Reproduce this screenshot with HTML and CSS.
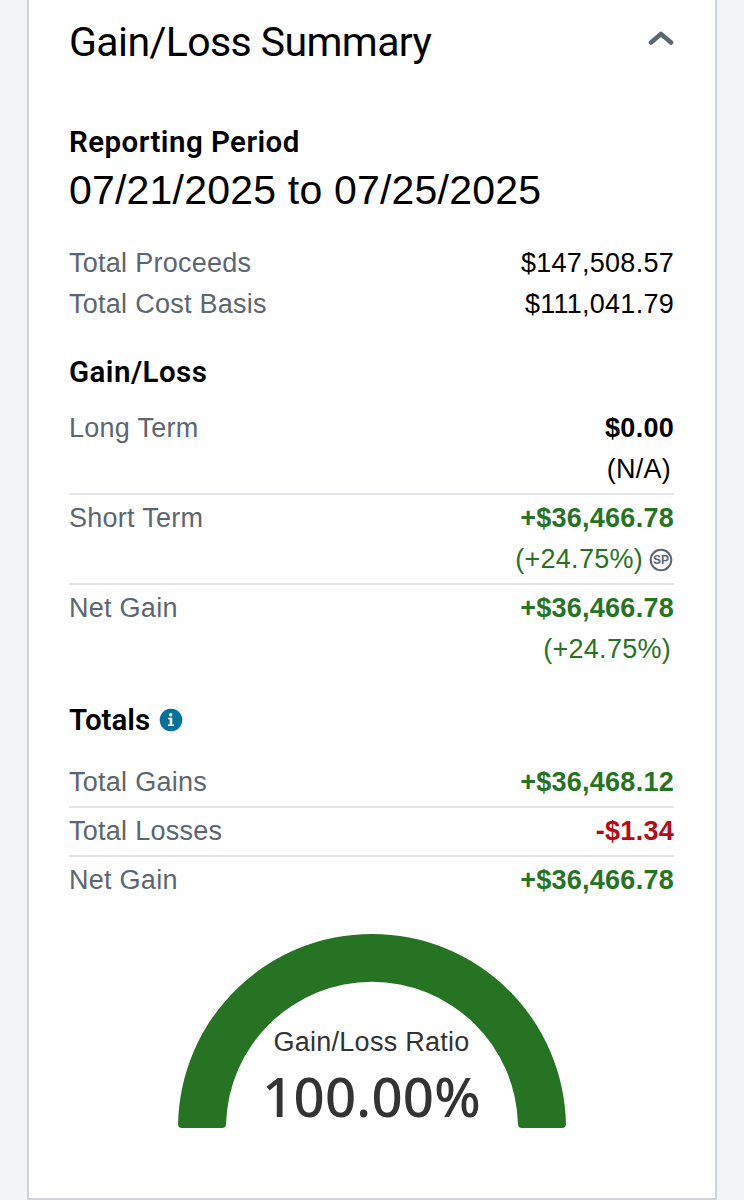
FILE: index.html
```html
<!DOCTYPE html>
<html lang="en">
<head>
<meta charset="utf-8">
<title>Gain/Loss Summary</title>
<link rel="stylesheet" href="styles.css">
</head>
<body>
<main class="card">
  <header class="card-header">
    <h1 class="title">Gain/Loss Summary</h1>
    <svg class="chevron" width="26" height="16" viewBox="0 0 26 16"><path d="M3 12.500 13 4l10 8.500" fill="none" stroke="#5c6670" stroke-width="4.600" stroke-linecap="round" stroke-linejoin="round"/></svg>
  </header>

  <section class="period">
    <h2 class="subhead sub-period">Reporting Period</h2>
    <p class="dates">07/21/2025 to 07/25/2025</p>
  </section>

  <section class="basis">
    <div class="line"><span class="label">Total Proceeds</span><span>$147,508.57</span></div>
    <div class="line"><span class="label">Total Cost Basis</span><span>$111,041.79</span></div>
  </section>

  <section class="gains">
    <h2 class="subhead sub-gain">Gain/Loss</h2>
    <div class="row">
      <span class="label">Long Term</span>
      <div class="values"><strong>$0.00</strong><span class="percent">(N/A)</span></div>
    </div>
    <div class="row">
      <span class="label">Short Term</span>
      <div class="values up"><strong>+$36,466.78</strong>
        <span class="with-badge">(+24.75%)<svg class="sp" width="24" height="24" viewBox="0 0 24 24"><circle cx="12" cy="12" r="10.300" fill="none" stroke="#5c6670" stroke-width="2"/><text x="12" y="16.200" text-anchor="middle" class="sp-text">SP</text></svg></span>
      </div>
    </div>
    <div class="row last">
      <span class="label">Net Gain</span>
      <div class="values up"><strong>+$36,466.78</strong><span class="percent">(+24.75%)</span></div>
    </div>
  </section>

  <section class="totals">
    <h2 class="subhead with-info"><span class="sub-totals">Totals</span><svg width="24" height="24" viewBox="0 0 24 24"><circle cx="12" cy="12" r="11.300" fill="#04719b"/><circle cx="11.700" cy="6.800" r="1.700" fill="#fff"/><path d="M9 9.700h4.300v6.800h1.700v1.600H9v-1.600h1.700v-5.200H9z" fill="#fff"/></svg></h2>
    <div class="row"><span class="label">Total Gains</span><strong class="up">+$36,468.12</strong></div>
    <div class="row"><span class="label">Total Losses</span><strong class="down">-$1.34</strong></div>
    <div class="row last"><span class="label">Net Gain</span><strong class="up">+$36,466.78</strong></div>
  </section>

  <section class="gauge">
    <svg class="arc" width="390" height="196" viewBox="0 0 390 196"><path d="M1.040 191A194 194 0 0 1 388.960 191Q389 195 385 195H345Q341 195 340.950 191A146 146 0 0 0 49.050 191Q49 195 45 195H5Q1 195 1.040 191Z" fill="#277324"/></svg>
    <div class="gauge-text">
      <span class="gauge-label">Gain/Loss Ratio</span>
      <span class="gauge-value">100.00%</span>
    </div>
  </section>
</main>
</body>
</html>
```
FILE: styles.css
```css
* { box-sizing: border-box; }
body {
  margin: 0;
  background: #f2f4f7;
  color: #000;
  font: 27px/41px "Liberation Sans", Arial, sans-serif;
  letter-spacing: 0.27px;
}
h1, h2, p { margin: 0; }
.card {
  width: 690px;
  height: 1200px;
  margin-left: 27px;
  padding: 0 41px 0 40px;
  background: #fff;
  border: 2px solid #cfd3d9;
  border-top: 0;
}
.card-header {
  display: flex;
  justify-content: space-between;
  height: 118px;
  padding-top: 17px;
}
.title {
  font-family: Roboto, "Liberation Sans", sans-serif;
  font-size: 41px;
  line-height: 50px;
  font-weight: 400;
  letter-spacing: -0.6px;
}
.chevron { margin-top: 13px; }
.subhead {
  font-family: Roboto, "Liberation Sans", sans-serif;
  font-size: 29.5px;
  line-height: 48px;
  font-weight: 600;
  letter-spacing: 0.45px;
}
.sub-totals { letter-spacing: 0; }
.dates {
  font-size: 41px;
  line-height: 48px;
  letter-spacing: 0.2px;
}
.basis { margin-top: 29px; }
.line, .row { display: flex; justify-content: space-between; }
.label { color: #5c6670; }
.gains { padding-top: 23px; }
.gains .subhead { margin-bottom: 9px; }
.row {
  padding: 3px 0;
  border-bottom: 2px solid #e2e5e9;
}
.last { border-bottom-color: transparent; }
.values { display: flex; flex-direction: column; align-items: flex-end; }
.percent { padding-right: 3px; }
.up { color: #277324; }
.down { color: #b60a14; }
.with-badge { display: flex; align-items: center; gap: 6px; }
.sp { margin-right: 1px; }
.sp-text {
  font-size: 12px;
  font-weight: 700;
  letter-spacing: 0;
  fill: #5c6670;
}
.totals { padding-top: 21px; }
.with-info { display: flex; align-items: center; gap: 9px; margin-bottom: 15px; }
.gauge {
  display: grid;
  justify-items: center;
  margin-top: 27px;
}
.arc, .gauge-text { grid-area: 1 / 1; }
.gauge-text {
  display: flex;
  flex-direction: column;
  align-items: center;
  padding-top: 89px;
  color: #333;
}
.gauge-value {
  font-family: "Noto Sans", sans-serif;
  font-size: 54.5px;
  font-weight: 500;
  line-height: 66px;
  letter-spacing: 0.2px;
}
```
